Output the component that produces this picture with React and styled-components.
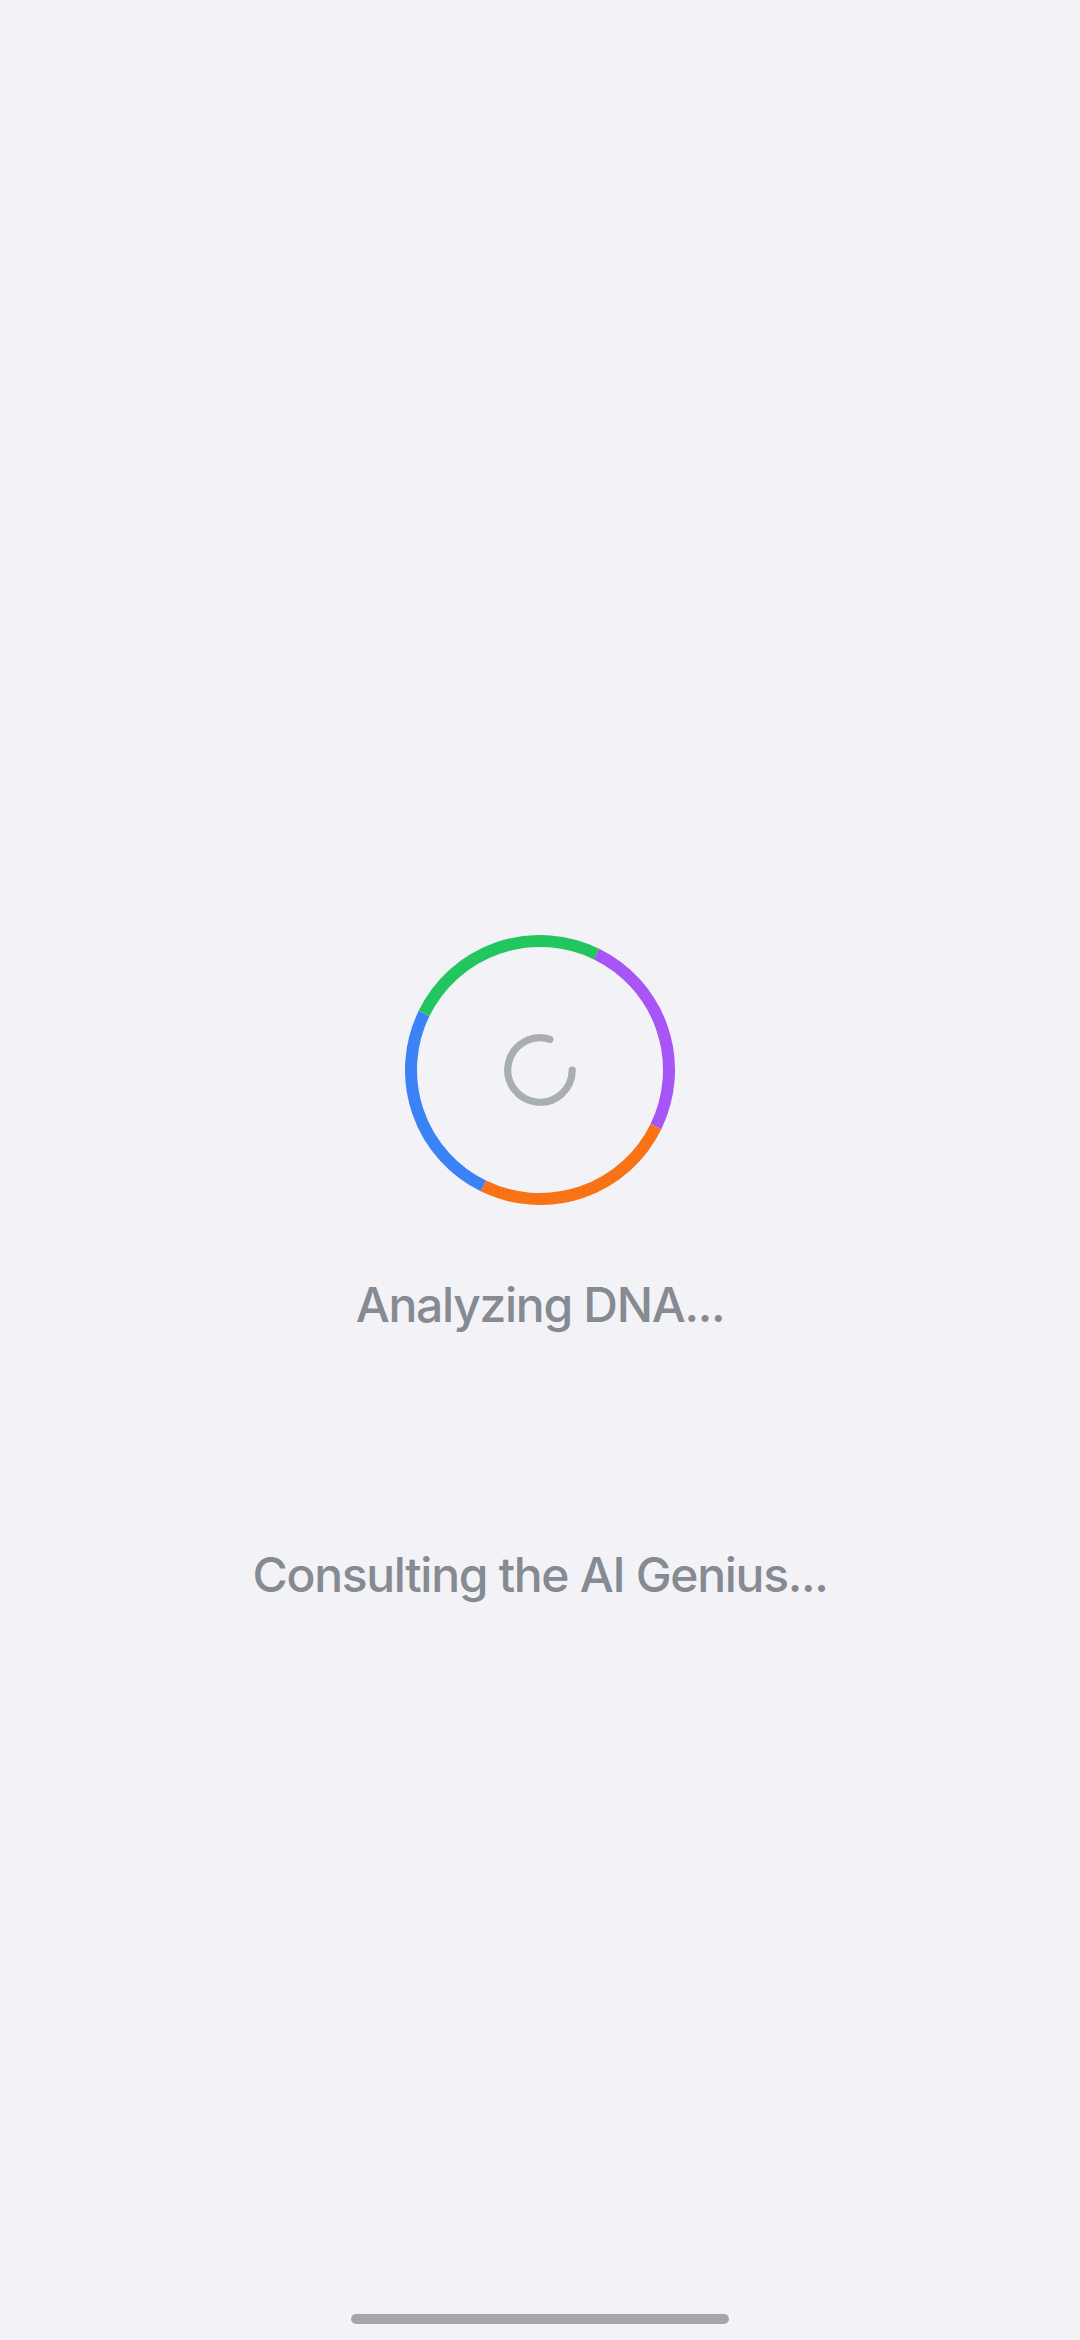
import React from 'react'
import styled, { createGlobalStyle } from 'styled-components'

const GlobalStyle = createGlobalStyle`
  html, body {
    margin: 0;
    padding: 0;
    background: #f2f2f7;
  }
  body {
    font-family: Inter, "Noto Sans", "Liberation Sans", sans-serif;
  }
`

const segments = [
  { color: '#3b82f6', start: 116 },
  { color: '#22c55e', start: 206 },
  { color: '#a855f7', start: -64 },
  { color: '#f97316', start: 26 },
]

const RADIUS = 129
const CIRC = 2 * Math.PI * RADIUS

const Screen = styled.div`
  min-height: 2340px;
  box-sizing: border-box;
  display: flex;
  flex-direction: column;
  align-items: center;
  padding-top: 935px;
  padding-bottom: 16px;
`

const RingWrap = styled.div`
  position: relative;
  width: 270px;
  height: 270px;
  display: flex;
  align-items: center;
  justify-content: center;
`

const Ring = styled.svg`
  position: absolute;
  inset: 0;
`

const Status = styled.p`
  margin: ${(p) => p.$top}px 0 0;
  font-size: 48px;
  line-height: 1.2;
  font-weight: 500;
  color: #858a93;
  letter-spacing: -1.3px;
`

const HomeIndicator = styled.div`
  margin-top: auto;
  width: 378px;
  height: 10px;
  border-radius: 5px;
  background: #a5a5aa;
`

const Loader = () => (
  <svg width="86" height="86" viewBox="0 0 24 24" fill="none" stroke="#a9adb4" strokeWidth="2" strokeLinecap="round">
    <path d="M21 12a9 9 0 1 1-6.219-8.56" />
  </svg>
)

export default function App() {
  return (
    <>
      <GlobalStyle />
      <Screen>
        <RingWrap>
          <Ring width="270" height="270" viewBox="0 0 270 270">
            {segments.map((s) => (
              <circle
                key={s.color}
                cx="135"
                cy="135"
                r={RADIUS}
                fill="none"
                stroke={s.color}
                strokeWidth="12"
                strokeDasharray={`${CIRC / 4} ${CIRC}`}
                transform={`rotate(${s.start} 135 135)`}
              />
            ))}
          </Ring>
          <Loader />
        </RingWrap>
        <Status $top={71}>Analyzing DNA...</Status>
        <Status $top={212}>Consulting the AI Genius...</Status>
        <HomeIndicator />
      </Screen>
    </>
  )
}
